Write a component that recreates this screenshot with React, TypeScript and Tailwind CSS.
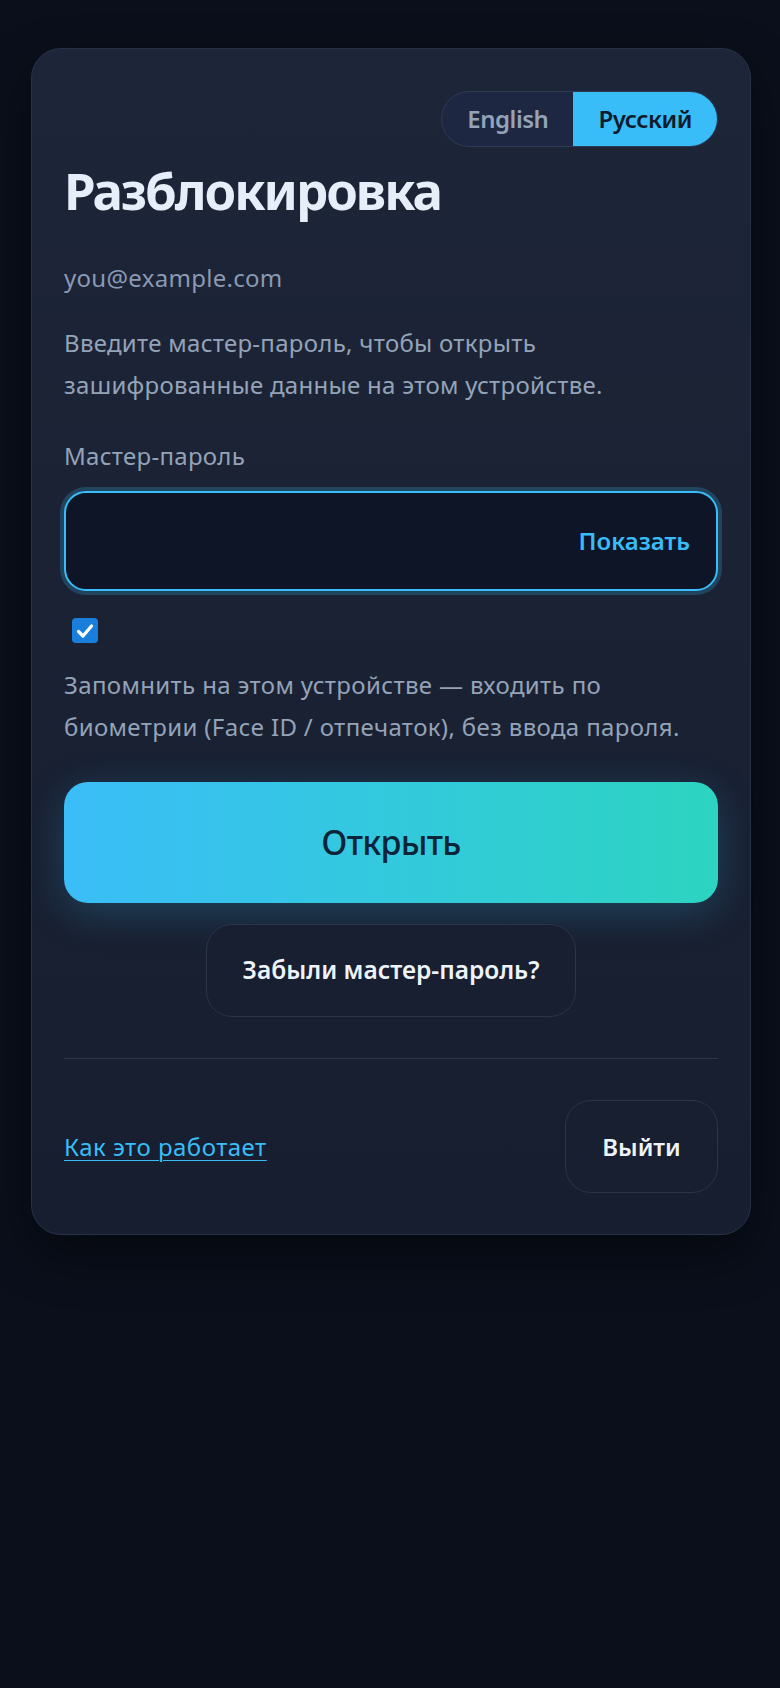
import React from "react";

export default function App() {
  return (
    <div
      className="min-h-screen bg-[#0a0f1b] pl-[31px] pr-[29px] pt-[48px] pb-10"
      style={{ fontFamily: '"Noto Sans", "Open Sans", sans-serif' }}
    >
      <div className="rounded-[30px] border border-[#283247] bg-gradient-to-b from-[#1d2538] to-[#171e2f] px-8 pt-[42px] pb-[41px] shadow-[0_20px_50px_rgba(0,0,0,0.45)]">
        <div className="flex justify-end">
          <div className="flex h-[56px] overflow-hidden rounded-full border border-[#2e3952] bg-[#1e2741]">
            <button className="px-[25px] text-[24px] font-semibold text-[#94a3b8] tracking-[-0.02em]">
              English
            </button>
            <button className="bg-[#38bdf8] px-[25px] text-[24px] font-semibold text-[#0f1b2d] tracking-[-0.02em]">
              Русский
            </button>
          </div>
        </div>

        <h1 className="mt-[12px] text-[51px] font-bold leading-[62px] text-[#e6eef9] tracking-[-0.04em]">
          Разблокировка
        </h1>

        <div className="mt-[39px] text-[24px] leading-[36px] text-[#8b9ab3] tracking-[0.012em]">
          you@example.com
        </div>

        <p className="mt-[26px] text-[24px] leading-[42px] text-[#94a3b8] tracking-[0.012em]">
          Введите мастер-пароль, чтобы открыть
          <br />
          зашифрованные данные на этом устройстве.
        </p>

        <div className="mt-[32px] text-[24px] leading-[36px] text-[#94a3b8] tracking-[0.012em]">
          Мастер-пароль
        </div>

        <div className="mt-[17px] flex h-[100px] items-center justify-end rounded-[22px] border-2 border-[#38bdf8] bg-[#0e1527] pr-[26px] shadow-[0_0_0_4px_rgba(56,189,248,0.22)]">
          <span className="text-[24px] font-semibold text-[#38bdf8]">
            Показать
          </span>
        </div>

        <div className="mt-[27px] ml-[8px] flex h-[25px] w-[26px] items-center justify-center rounded-[4px] bg-[#1a7fdc]">
          <svg width="18" height="16" viewBox="0 0 18 16" fill="none">
            <path
              d="M2.5 8.5 L7 13 L15.5 3"
              stroke="white"
              strokeWidth="3.2"
              strokeLinecap="round"
              strokeLinejoin="round"
            />
          </svg>
        </div>

        <p className="mt-[21px] text-[24px] leading-[42px] text-[#94a3b8] tracking-[0.015em]">
          Запомнить на этом устройстве — входить по
          <br />
          биометрии (Face ID / отпечаток), без ввода пароля.
        </p>

        <button className="mt-[34px] flex h-[121px] w-full items-center justify-center rounded-[24px] bg-gradient-to-r from-[#3bbdf8] to-[#2dd4c0] text-[34px] font-medium text-[#0c2438] tracking-[-0.02em] shadow-[0_10px_40px_rgba(56,189,248,0.22)]">
          Открыть
        </button>

        <div className="mt-[21px] flex justify-center">
          <button className="h-[93px] w-[370px] rounded-[26px] border border-[#2b3548] bg-[#181f31] text-[24.5px] font-semibold text-[#eef3fa]">
            Забыли мастер-пароль?
          </button>
        </div>

        <div className="mt-[41px] h-px bg-[#2b3447]" />

        <div className="mt-[41px] flex items-center justify-between">
          <a
            href="#"
            className="text-[24px] text-[#38bdf8] underline underline-offset-[4px] decoration-1 tracking-[0.02em]"
          >
            Как это работает
          </a>
          <button className="h-[93px] w-[153px] rounded-[26px] border border-[#2b3548] bg-[#181f31] text-[24px] font-semibold text-[#eef3fa]">
            Выйти
          </button>
        </div>
      </div>
    </div>
  );
}
